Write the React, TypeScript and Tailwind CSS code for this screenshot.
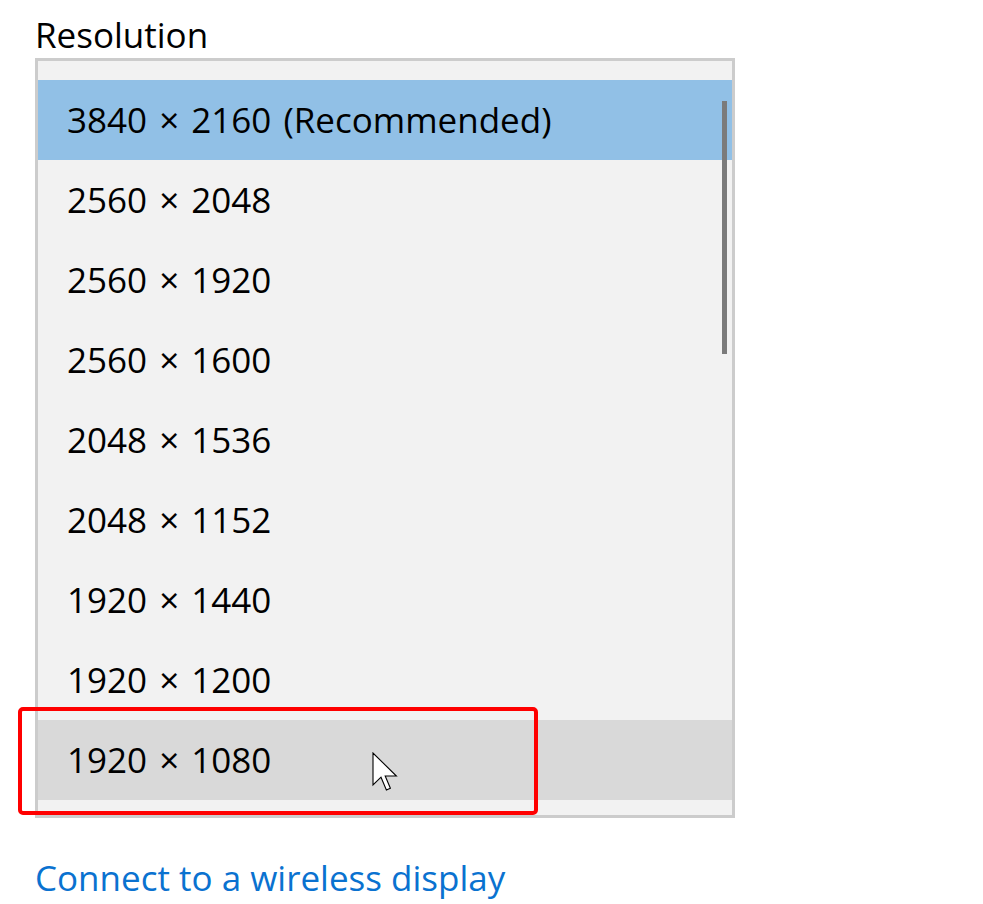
const resolutions = [
  "3840 × 2160 (Recommended)",
  "2560 × 2048",
  "2560 × 1920",
  "2560 × 1600",
  "2048 × 1536",
  "2048 × 1152",
  "1920 × 1440",
  "1920 × 1200",
  "1920 × 1080",
];

function Cursor() {
  return (
    <svg
      width="28"
      height="42"
      viewBox="0 0 14 21"
      className="absolute left-[372px] top-[752px]"
    >
      <path
        d="M0.5 0.5 L0.5 16.5 L4.5 12.6 L7.2 19 L9.2 18.1 L6.6 12 L12.2 12 Z"
        fill="#ffffff"
        stroke="#000000"
        strokeWidth="0.55"
        strokeLinejoin="miter"
      />
    </svg>
  );
}

export default function App() {
  const selected = 0;
  const hovered = 8;

  return (
    <div className="relative w-[983px] h-[904px] bg-white font-['Open_Sans','Noto_Sans',sans-serif] text-black">
      <div className="pl-[35px] pt-[15px] h-[58px] text-[35px] leading-[40px]">
        Resolution
      </div>

      {/* list box */}
      <div className="relative ml-[35px] w-[700px] border-[3px] border-[#cccccc] bg-[#f2f2f2] pt-[19px] pb-[15px]">
        {resolutions.map((r, i) => (
          <div
            key={r}
            className={`h-[80px] flex items-center pl-[29px] text-[35px] [word-spacing:3px] ${
              i === selected
                ? "bg-[#91c0e6]"
                : i === hovered
                ? "bg-[#d9d9d9]"
                : ""
            }`}
          >
            {r}
          </div>
        ))}
        {/* scrollbar thumb */}
        <div className="absolute right-[5px] top-[40px] w-[5px] h-[253px] bg-[#7b7b7b]" />
      </div>

      <div className="pl-[35px] pt-[40px] text-[35px] leading-[40px] text-[#0a72d0]">
        Connect to a wireless display
      </div>

      {/* highlight annotation */}
      <div className="absolute left-[18px] top-[707px] w-[520px] h-[108px] border-4 border-[#ff0000] rounded-[5px]" />
      <Cursor />
    </div>
  );
}
